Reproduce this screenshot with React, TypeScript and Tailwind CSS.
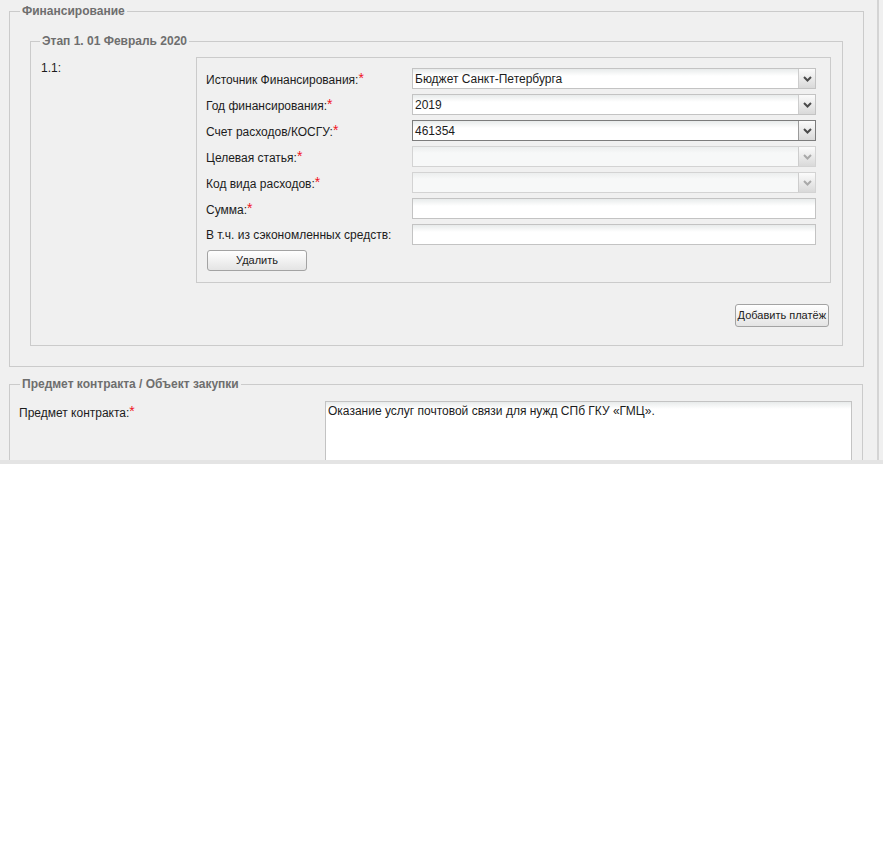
import type { ReactNode } from "react";

interface Row {
  label: string;
  required: boolean;
  kind: "select" | "text";
  value?: string;
  disabled?: boolean;
  focused?: boolean;
}

const rows: Row[] = [
  { label: "Источник Финансирования:", required: true, kind: "select", value: "Бюджет Санкт-Петербурга" },
  { label: "Год финансирования:", required: true, kind: "select", value: "2019" },
  { label: "Счет расходов/КОСГУ:", required: true, kind: "select", value: "461354", focused: true },
  { label: "Целевая статья:", required: true, kind: "select", disabled: true },
  { label: "Код вида расходов:", required: true, kind: "select", disabled: true },
  { label: "Сумма:", required: true, kind: "text" },
  { label: "В т.ч. из сэкономленных средств:", required: false, kind: "text" },
];

function Star() {
  return <span className="text-[#f0141e] text-[14px] leading-none align-[1px]">*</span>;
}

function Chevron({ disabled }: { disabled?: boolean }) {
  return (
    <svg width="9" height="6" viewBox="0 0 9 6">
      <path
        d="M1 1 L4.5 4.5 L8 1"
        fill="none"
        stroke={disabled ? "#a9a9a9" : "#4b4b4b"}
        strokeWidth="2"
      />
    </svg>
  );
}

function Select({ value, disabled, focused }: { value?: string; disabled?: boolean; focused?: boolean }) {
  const border = focused ? "border-[#7c7c7c]" : disabled ? "border-[#d3d3d3]" : "border-[#c3c3c3]";
  return (
    <div className={`flex h-[21px] border ${border}`}>
      <div
        className={`flex-1 flex items-center pl-[2px] leading-[14px] ${
          disabled
            ? "bg-[linear-gradient(to_bottom,#eceeee,#f7f8f8_6px)]"
            : "bg-[linear-gradient(to_bottom,#e8ebeb,#ffffff_7px)]"
        }`}
      >
        {value}
      </div>
      <div
        className={`w-[17px] flex items-center justify-center border-l ${
          focused ? "border-[#9a9a9a]" : "border-[#cdcdcd]"
        } bg-[linear-gradient(to_bottom,#fbfbfb,#d9d9d9)]`}
      >
        <Chevron disabled={disabled} />
      </div>
    </div>
  );
}

function TextInput() {
  return (
    <div className="h-[21px] border border-[#c3c3c3] bg-[linear-gradient(to_bottom,#e8ebeb,#ffffff_7px)]" />
  );
}

function Fieldset({ title, className, children }: { title: string; className?: string; children: ReactNode }) {
  return (
    <fieldset className={`border border-[#cbcbcb] ${className ?? ""}`}>
      <legend className="px-[2px] font-bold text-[12px] leading-[14px] text-[#6e6e6e]">{title}</legend>
      {children}
    </fieldset>
  );
}

function Button({ children, className }: { children: ReactNode; className?: string }) {
  return (
    <div
      className={`flex items-center justify-center rounded-[3px] border border-[#a3a3a3] bg-[linear-gradient(to_bottom,#ffffff,#e4e4e4)] text-[11px] text-[#222] ${className ?? ""}`}
    >
      {children}
    </div>
  );
}

export default function App() {
  return (
    <div className="w-[883px] bg-white font-['Liberation_Sans',Arial,sans-serif] text-[12px] text-[#1c1c1c]">
      <div className="flex h-[460px] overflow-hidden bg-[#f0f0f0]">
        <div className="w-[877px] pt-[4px]">
          <Fieldset title="Финансирование" className="ml-[9px] w-[854px] [&>legend]:ml-[10px]">
            <div className="px-[20px] pt-[16px] pb-[20px]">
              <Fieldset title="Этап 1. 01 Февраль 2020" className="w-[813px] [&>legend]:ml-[9px]">
                <div className="pl-[10px] pr-[11px] pt-[9px] pb-[18px]">
                  <div className="flex">
                    <div className="w-[155px] pt-[4px] leading-[14px]">1.1:</div>
                    <div className="w-[635px] border border-[#cbcbcb] pt-[10px] pl-[9px] pr-[14px] pb-[11px]">
                      <div className="grid grid-cols-[206px_404px] gap-y-[5px]">
                        {rows.map((row) => (
                          <div key={row.label} className="contents">
                            <div className="flex items-center h-[21px] leading-[14px]">
                              <span>
                                {row.label}
                                {row.required && <Star />}
                              </span>
                            </div>
                            {row.kind === "select" ? (
                              <Select value={row.value} disabled={row.disabled} focused={row.focused} />
                            ) : (
                              <TextInput />
                            )}
                          </div>
                        ))}
                        <Button className="w-[100px] h-[21px] ml-[1px]">Удалить</Button>
                      </div>
                    </div>
                  </div>
                  <div className="flex justify-end mt-[21px]">
                    <Button className="h-[23px] px-[2px] mr-[2px]">Добавить платёж</Button>
                  </div>
                </div>
              </Fieldset>
            </div>
          </Fieldset>

          <Fieldset
            title="Предмет контракта / Объект закупки"
            className="ml-[9px] mt-[10px] w-[854px] [&>legend]:ml-[10px]"
          >
            <div className="flex pl-[9px] pr-[10px] pt-[10px] pb-[10px]">
              <div className="w-[306px] pt-[3px] leading-[14px]">
                Предмет контракта:
                <Star />
              </div>
              <div className="w-[527px] h-[90px] border border-[#c3c3c3] bg-[linear-gradient(to_bottom,#e8ebeb,#ffffff_7px)] pl-[2px] pt-[2px] leading-[14px]">
                Оказание услуг почтовой связи для нужд СПб ГКУ «ГМЦ».
              </div>
            </div>
          </Fieldset>
        </div>
        <div className="w-[6px] border-l-2 border-[#d4d4d4]" />
      </div>
      <div className="h-[4px] bg-[#e4e4e4]" />
    </div>
  );
}
